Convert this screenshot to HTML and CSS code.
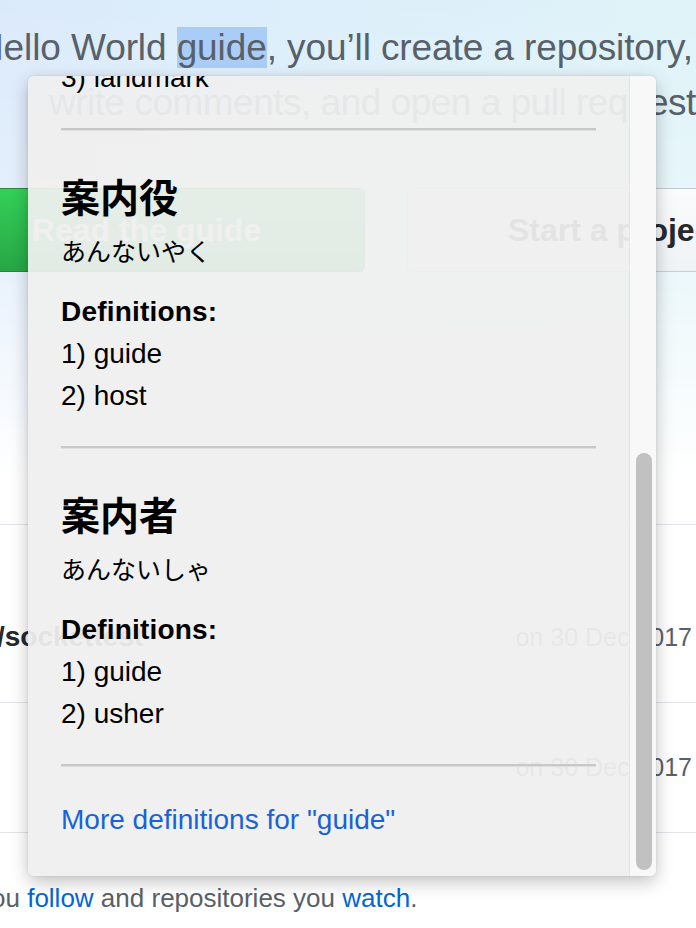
FILE: index.html
```html
<!DOCTYPE html>
<html lang="en">
<head>
<meta charset="utf-8">
<title>Dictionary lookup</title>
<link rel="stylesheet" href="styles.css">
</head>
<body>
<div class="page">
  <section class="hero">
    <p class="hero-line l1">Hello World <span class="sel">guide</span>, you’ll create a repository,</p>
    <p class="hero-line l2">write comments, and open a pull request</p>
    <div class="cta">
      <a class="btn btn-green">Read the guide</a>
      <a class="btn btn-light">Start a project</a>
    </div>
  </section>
  <div class="feed">
    <div class="row r1"><span class="repo">/sockettest</span><span class="date">on 30 Dec 2017</span></div>
    <div class="row r2"><span class="repo"></span><span class="date">on 30 Dec 2017</span></div>
  </div>
  <p class="note">ou <a class="link">follow</a> and repositories you <a class="link">watch</a>.</p>
</div>

<div class="popup">
  <div class="popup-body">
    <p class="def first">3) landmark</p>
    <hr class="sep">
    <h2 class="word">案内役</h2>
    <p class="reading">あんないやく</p>
    <h3 class="defs-title">Definitions:</h3>
    <p class="def">1) guide</p>
    <p class="def">2) host</p>
    <hr class="sep">
    <h2 class="word">案内者</h2>
    <p class="reading">あんないしゃ</p>
    <h3 class="defs-title">Definitions:</h3>
    <p class="def">1) guide</p>
    <p class="def">2) usher</p>
    <hr class="sep">
    <a class="more">More definitions for "guide"</a>
  </div>
  <div class="scrollbar"><div class="thumb"></div></div>
</div>
</body>
</html>
```

FILE: styles.css
```css
* { box-sizing: border-box; }

html, body {
  margin: 0;
  padding: 0;
  width: 696px;
  height: 928px;
  overflow: hidden;
  background: #ffffff;
  font-family: "Liberation Sans", Arial, sans-serif;
}

.page {
  width: 696px;
  height: 928px;
  overflow: hidden;
}

/* ---------- hero ---------- */
.hero {
  padding-top: 20px;
  height: 480px;
  background:
    linear-gradient(180deg, rgba(255,255,255,0) 0%, rgba(255,255,255,0.3) 50%, #ffffff 100%),
    linear-gradient(90deg, #dbeafb 0%, #dcefFa 50%, #dff3f8 100%);
}

.hero-line {
  margin: 0;
  font-size: 37px;
  line-height: 55px;
  color: #586069;
  white-space: nowrap;
}
.l1 { margin-left: -23px; letter-spacing: -0.1px; }
.l2 { margin-left: 49px; letter-spacing: -0.5px; }

.sel {
  background: #aacdf8;
}

.cta {
  display: flex;
  gap: 42px;
  margin-top: 58px;
  margin-left: -72px;
}

.btn {
  flex: none;
  display: flex;
  align-items: center;
  justify-content: center;
  height: 84px;
  border-radius: 6px;
  font-size: 32px;
  font-weight: bold;
  white-space: nowrap;
}

.btn-green {
  width: 437px;
  color: #ffffff;
  background: linear-gradient(180deg, #34d058 0%, #28a745 100%);
  border: 1px solid rgba(27,31,35,0.2);
  border-bottom-color: #1f8a3a;
}

.btn-light {
  width: 417px;
  color: #24292e;
  background: linear-gradient(180deg, #fafbfc 0%, #eff3f6 100%);
  border: 1px solid rgba(27,31,35,0.2);
}

/* ---------- feed ---------- */
.feed {
  margin-top: 44px;
  border-top: 1px solid #e1e4e8;
}

.row {
  display: flex;
  justify-content: space-between;
  align-items: center;
  border-bottom: 1px solid #e1e4e8;
  line-height: 42px;
}
.r1 { padding: 91px 4px 44px 0; }
.r2 { padding: 43px 4px 44px 0; }

.repo {
  margin-left: -3px;
  font-size: 28px;
  font-weight: bold;
  color: #24292e;
}

.date {
  font-size: 25px;
  color: #586069;
}

.note {
  margin: 0;
  padding-top: 45px;
  margin-left: -9px;
  font-size: 26px;
  line-height: 40px;
  color: #586069;
  white-space: nowrap;
}
.link { color: #0366d6; }

/* ---------- popup ---------- */
.popup {
  position: absolute;
  left: 28px;
  top: 76px;
  width: 628px;
  height: 800px;
  display: flex;
  border-radius: 6px;
  overflow: hidden;
  background: rgba(239,239,239,0.94);
  box-shadow: 0 6px 18px rgba(0,0,0,0.24), 0 0 3px rgba(0,0,0,0.10);
}

.popup-body {
  flex: 1;
  min-width: 0;
  padding: 0 33px;
  overflow: hidden;
  color: #000000;
  font-family: "Liberation Sans", Arial, "Noto Sans CJK JP", sans-serif;
}

.def {
  margin: 0;
  font-size: 28px;
  line-height: 42px;
}
.def.first { margin-top: -19px; }

.sep {
  margin: 29px 0 0 0;
  height: 0;
  border: 0;
  border-top: 2px solid #c6c8ca;
  border-bottom: 1px solid #dedfe0;
}

.word {
  margin: 40px 0 0 0;
  font-family: "Noto Sans CJK JP", sans-serif;
  font-size: 39px;
  line-height: 48px;
  font-weight: bold;
}

.reading {
  margin: 10px 0 0 0;
  font-family: "Noto Sans CJK JP", sans-serif;
  font-size: 25px;
  line-height: 42px;
}

.defs-title {
  margin: 20px 0 0 0;
  font-size: 28px;
  line-height: 42px;
  font-weight: bold;
  letter-spacing: 0.2px;
}

.more {
  display: block;
  margin-top: 32px;
  font-size: 28px;
  line-height: 42px;
  color: #1a62d8;
}

.scrollbar {
  flex: none;
  width: 27px;
  padding: 377px 5px 6px 6px;
  background: #f8f8f8;
  border-left: 1px solid #e6e6e6;
}

.thumb {
  width: 16px;
  height: 100%;
  border-radius: 8px;
  background: #c1c1c1;
}
```
